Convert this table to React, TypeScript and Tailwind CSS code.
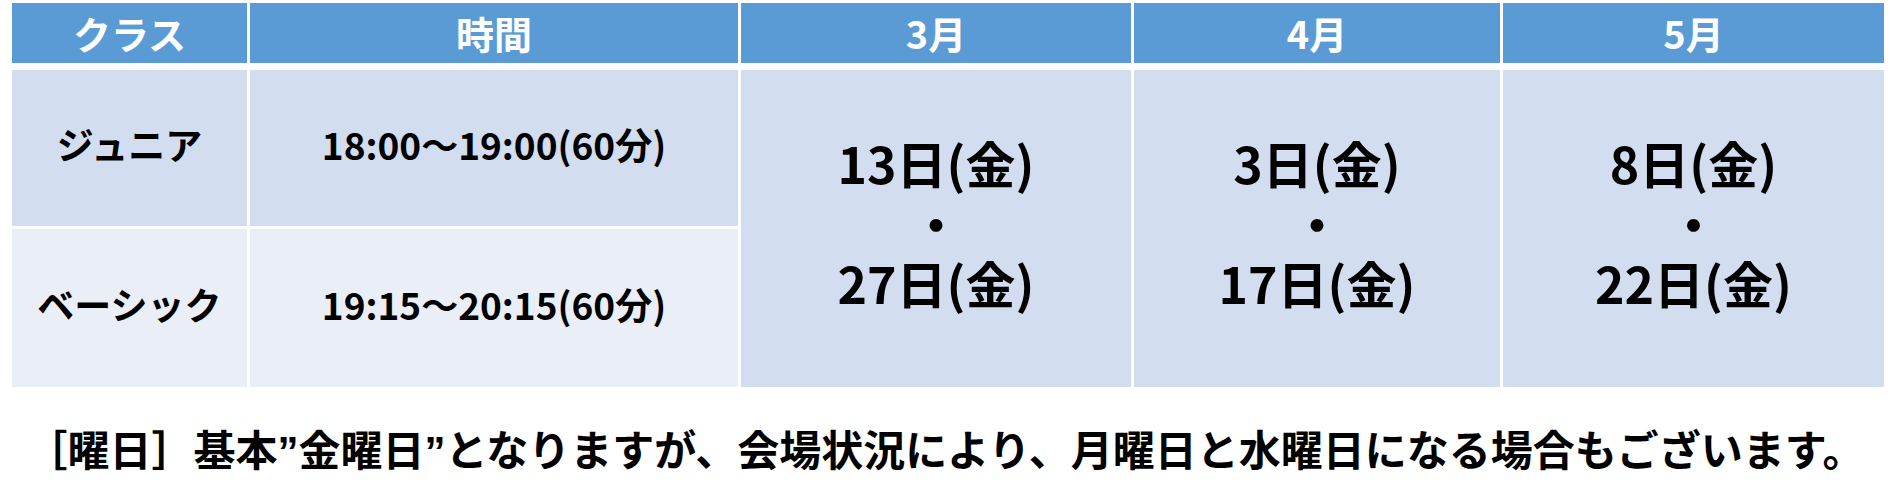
import React from "react";

const cjk = { fontFamily: '"Noto Sans CJK JP", "Noto Sans", sans-serif' };

const months = [
  { m: "3月", a: "13日(金)", b: "27日(金)" },
  { m: "4月", a: "3日(金)", b: "17日(金)" },
  { m: "5月", a: "8日(金)", b: "22日(金)" },
];

export default function App() {
  return (
    <div className="w-[1890px] h-[504px] bg-white overflow-hidden" style={cjk}>
      <div className="pt-[3px] pl-[12px]">
        {/* header */}
        <div className="grid grid-cols-[235px_488px_390px_366px_381px] gap-x-[3px] h-[60px]">
          <div className="bg-[#5b9bd5] flex items-center justify-center pb-[2px] text-white font-bold text-[38px]">クラス</div>
          <div className="bg-[#5b9bd5] flex items-center justify-center pb-[2px] text-white font-bold text-[38px]">時間</div>
          {months.map((x) => (
            <div key={x.m} className="bg-[#5b9bd5] flex items-center justify-center pb-[2px] text-white font-bold text-[38px]">
              {x.m}
            </div>
          ))}
        </div>
        {/* body */}
        <div className="mt-[7px] grid grid-cols-[235px_488px_390px_366px_381px] grid-rows-[156px_158px] gap-x-[3px] gap-y-[3px]">
          <div className="bg-[#d2deef] flex items-center justify-center pb-[6px] font-bold text-[37px] text-black">ジュニア</div>
          <div className="bg-[#d2deef] flex items-center justify-center pb-[6px] font-bold text-[37px] text-black">18:00～19:00(60分)</div>
          {months.map((x) => (
            <div
              key={x.m}
              className="row-span-2 bg-[#d2deef] flex flex-col items-center justify-center pb-[14px] font-bold text-[50px] text-black"
            >
              <div className="leading-[60px] h-[60px]">{x.a}</div>
              <div className="leading-[60px] h-[60px]">・</div>
              <div className="leading-[60px] h-[60px]">{x.b}</div>
            </div>
          ))}
          <div className="bg-[#eaeff7] flex items-center justify-center pb-[6px] font-bold text-[37px] text-black">ベーシック</div>
          <div className="bg-[#eaeff7] flex items-center justify-center pb-[6px] font-bold text-[37px] text-black">19:15～20:15(60分)</div>
        </div>
      </div>
      <div
        className="pt-[44px] text-center font-bold text-[42px] leading-[42px] text-black"
        style={{ fontFamily: '"Liberation Sans", "Noto Sans CJK JP", sans-serif' }}
      >
        ［曜日］基本”金曜日”となりますが、会場状況により、月曜日と水曜日になる場合もございます。
      </div>
    </div>
  );
}
